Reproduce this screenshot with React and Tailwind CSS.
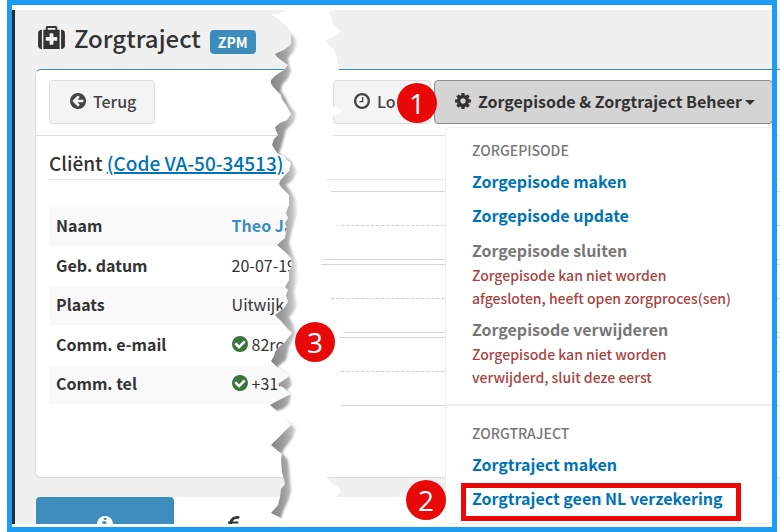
import clsx from "clsx";

const CIRCLE =
  "q0 209-103 385.5t-279.5 279.5-385.5 103-385.5-103-279.5-279.5-103-385.5 103-385.5 279.5-279.5 385.5-103 385.5 103 279.5 279.5 103 385.5z";

const paths = {
  medkit:
    "M1280 1088v-192q0-14-9-23t-23-9h-224v-224q0-14-9-23t-23-9h-192q-14 0-23 9t-9 23v224h-224q-14 0-23 9t-9 23v192q0 14 9 23t23 9h224v224q0 14 9 23t23 9h192q14 0 23-9t9-23v-224h224q14 0 23-9t9-23zm-640-704h512v-128h-512v128zm-384 0v1280h-32q-92 0-158-66t-66-158v-832q0-92 66-158t158-66h32zm1184 0v1280h-1088v-1280h160v-160q0-40 28-68t68-28h576q40 0 68 28t28 68v160h160zm352 224v832q0 92-66 158t-158 66h-32v-1280h32q92 0 158 66t66 158z",
  back:
    "M1408 960v-128q0-26-19-45t-45-19h-502l189-189q19-19 19-45t-19-45l-91-91q-18-18-45-18t-45 18l-362 362-91 91q-18 18-18 45t18 45l91 91 362 362q18 18 45 18t45-18l91-91q18-18 18-45t-18-45l-189-189h502q26 0 45-19t19-45zm256-64" +
    CIRCLE,
  clock:
    "M1024 544v448q0 14-9 23t-23 9h-320q-14 0-23-9t-9-23v-64q0-14 9-23t23-9h224v-352q0-14 9-23t23-9h64q14 0 23 9t9 23zm416 352q0-148-73-273t-198-198-273-73-273 73-198 198-73 273 73 273 198 198 273 73 273-73 198-198 73-273zm224 0" +
    CIRCLE,
  check:
    "M1412 734q0-28-18-46l-91-90q-19-19-45-19t-45 19l-408 407-226-226q-19-19-45-19t-45 19l-91 90q-18 18-18 46 0 27 18 45l362 362q19 19 45 19 27 0 46-19l543-543q18-18 18-45zm252 162" +
    CIRCLE,
  info:
    "M1152 1376v-160q0-14-9-23t-23-9h-96v-512q0-14-9-23t-23-9h-320q-14 0-23 9t-9 23v160q0 14 9 23t23 9h96v320h-96q-14 0-23 9t-9 23v160q0 14 9 23t23 9h448q14 0 23-9t9-23zm-128-896v-160q0-14-9-23t-23-9h-192q-14 0-23 9t-9 23v160q0 14 9 23t23 9h192q14 0 23-9t9-23zm640 416" +
    CIRCLE,
  cog:
    "M1152 896q0-106-75-181t-181-75-181 75-75 181 75 181 181 75 181-75 75-181zm512-109v222q0 12-8 23t-20 13l-185 28q-19 54-39 91 35 50 107 138 10 12 10 25t-9 23q-27 37-99 108t-94 71q-12 0-26-9l-138-108q-44 23-91 38-16 136-29 186-7 28-36 28h-222q-14 0-24.5-8.5t-11.5-21.5l-28-184q-49-16-90-37l-141 107q-10 9-25 9-14 0-25-11-126-114-165-168-7-10-7-23 0-12 8-23 15-21 51-66.5t54-70.5q-27-50-41-99l-183-27q-13-2-21-12.5t-8-23.5v-222q0-12 8-23t19-13l186-28q14-46 39-92-40-57-107-138-10-12-10-24 0-10 9-23 26-36 98.5-107.5t94.5-71.5q13 0 26 10l138 107q44-23 91-38 16-136 29-186 7-28 36-28h222q14 0 24.5 8.5t11.5 21.5l28 184q49 16 90 37l142-107q9-9 24-9 13 0 25 10 129 119 165 170 7 8 7 22 0 12-8 23-15 21-51 66.5t-54 70.5q26 50 41 98l183 28q13 2 21 12.5t8 23.5z",
  euro:
    "M1360 1307l35 159q3 12-3 22.5t-17 14.5l-5 1q-4 2-10.5 3.5t-16 4.5-21.5 5.5-25.5 5-30 5-33.5 4.5-36.5 3-38.5 1q-234 0-409-130.5t-238-351.5h-95q-13 0-22.5-9.5t-9.5-22.5v-113q0-13 9.5-22.5t22.5-9.5h66q-2-57 1-105h-67q-14 0-23-9t-9-23v-114q0-14 9-23t23-9h98q67-210 243.5-338t400.5-128q102 0 194 23 11 3 20 15 6 11 3 24l-43 159q-3 13-14 19.5t-24 2.5l-4-1q-4-1-11.5-2.5l-17.5-3.5-22.5-3.5-26-3-29-2.5-29.5-1q-126 0-226 64t-150 176h468q16 0 25 12 10 12 7 26l-24 114q-5 26-32 26h-488q-3 37 0 105h459q15 0 25 12 9 12 6 27l-24 112q-2 11-11 18.5t-20 7.5h-387q48 117 149.5 185.5t228.5 68.5q18 0 36-1.5t33.5-3.5 29.5-4.5 24.5-5 18.5-4.5l12-3 5-2q13-5 26 2 12 7 15 21z",
};

const Icon = ({ name, viewBox = "128 128 1536 1536", className = "size-4" }) => (
  <svg viewBox={viewBox} className={clsx("shrink-0", className)} fill="currentColor" aria-hidden="true">
    <path d={paths[name]} />
  </svg>
);

const client = [
  { label: "Naam", value: "Theo Ja", link: true },
  { label: "Geb. datum", value: "20-07-19" },
  { label: "Plaats", value: "Uitwijk" },
  { label: "Comm. e-mail", value: "82ro", verified: true },
  { label: "Comm. tel", value: "+31-", verified: true },
];

const MenuHeader = ({ children }) => (
  <h3 className="pt-0.5 text-[14px] leading-7 font-medium text-[#777]">{children}</h3>
);

const MenuLink = ({ children }) => (
  <a href="#" className="block text-[16px] leading-[34px] font-bold text-[#0073b7]">
    {children}
  </a>
);

const MenuDisabled = ({ title, lines }) => (
  <div className="pt-1.5 pb-px font-medium">
    <p className="text-[16px] leading-6 font-bold text-[#777]">{title}</p>
    <p className="mt-0.5 text-[14px] leading-[23px] text-[#a94442]">
      {lines[0]}
      <br />
      {lines[1]}
    </p>
  </div>
);

const Menu = () => (
  <div className="absolute top-full right-0 z-10 mt-[3px] w-[328px] rounded border border-[#eee] bg-white pt-1.5 pb-2">
    <div className="px-[26px]">
      <MenuHeader>ZORGEPISODE</MenuHeader>
      <MenuLink>Zorgepisode maken</MenuLink>
      <MenuLink>Zorgepisode update</MenuLink>
      <MenuDisabled
        title="Zorgepisode sluiten"
        lines={["Zorgepisode kan niet worden", "afgesloten, heeft open zorgproces(sen)"]}
      />
      <MenuDisabled
        title="Zorgepisode verwijderen"
        lines={["Zorgepisode kan niet worden", "verwijderd, sluit deze eerst"]}
      />
    </div>
    <hr className="mt-3.5 mb-[11px] border-t-2 border-[#eee]" />
    <div className="px-[26px]">
      <MenuHeader>ZORGTRAJECT</MenuHeader>
      <MenuLink>Zorgtraject maken</MenuLink>
      <MenuLink>Zorgtraject geen NL verzekering</MenuLink>
    </div>
  </div>
);

const Marker = ({ children, className }) => (
  <span
    className={clsx(
      "absolute z-30 flex size-10 items-center justify-center rounded-full bg-[#e90808] font-['Open_Sans',sans-serif] text-[28px] leading-none font-medium text-white",
      className
    )}
  >
    {children}
  </span>
);

const TEAR_LEFT =
  "M288 10L283 12 277 14 271 15 279 20 286 26 291 35V44L289 46 284 50 279 52 275 54 277 57 281 60 285 63 288 65 284 70 279 73 275 76 271 80 271 84 275 89 281 95 282 99 286 105 291 114 287 120 280 123 275 127 276 131 278 135 274 139 272 145 277 153 284 156 287 160 291 163 289 171 284 176 280 181 279 184 281 187 289 195 289 205 286 213 288 218 285 223 287 228 286 232 285 238 277 245 284 251 291 258 292 265 289 272 289 280 285 287 288 290 286 295 288 302 284 308 275 315 282 322 287 328 292 333 284 343 278 348 275 352 274 356 271 361 276 366 284 371 291 375 284 380 278 384 284 388 291 394 279 400 270 405 276 410 281 414 291 425 281 435 271 445 278 451 282 454 281 460 282 472 285 484 281 489 280 497 278 505 271 513 277 516 283 519V524";

const TEAR_RIGHT =
  "H337V496L341 491 338 486 332 484 330 480 327 478 328 470 341 404 339 370V336L344 332 329 298 321 264 322 259 338 225 331 191 326 179 333 135V116L336 115 343 111 338 108 333 106V80L339 69 337 58 334 50 330 46 326 41 332 37 337 35 341 31 337 28 333 25 332 18 329 14 331 10Z";

// white strip with ragged edges, the left one throws a shadow on it
const Tear = () => (
  <svg
    className="pointer-events-none absolute top-0 left-0 z-20"
    width="360"
    height="524"
    viewBox="0 0 360 524"
    aria-hidden="true"
  >
    <defs>
      <linearGradient id="shade" gradientUnits="userSpaceOnUse" x1="272" y1="0" x2="298" y2="0">
        <stop offset="0" stopColor="#868686" />
        <stop offset="0.5" stopColor="#a2a2a2" />
        <stop offset="0.8" stopColor="#c6c6c6" />
        <stop offset="1" stopColor="#f4f4f4" />
      </linearGradient>
      <filter id="soft" x="-10%" y="-2%" width="120%" height="104%">
        <feGaussianBlur stdDeviation="1.1" />
      </filter>
      <clipPath id="strip">
        <path d={TEAR_LEFT + TEAR_RIGHT} />
      </clipPath>
    </defs>
    <path fill="#fff" d={TEAR_LEFT + TEAR_RIGHT} />
    <g clipPath="url(#strip)">
      <path
        fill="url(#shade)"
        filter="url(#soft)"
        d="M262 17L270 16 277 20 284 26 290 33 296 39 297 45 293 52 288 58 289 65 291 71 288 78 282 85 281 91 285 97 289 105 296 113 296 118 292 124 286 130 283 141 281 148 279 153 285 157 292 162 297 173 292 181 286 185 290 190 296 200 297 213 292 230 289 243 292 252 296 262 298 277 294 292 297 305 294 312 289 317 293 324 296 333 289 347 286 360 277 367 283 371 289 375 292 385 287 390 291 395 289 404 283 409 276 411 279 415 288 422 296 429 292 439 284 449 282 453 288 460 289 467 291 492 288 501 284 509 281 518 283 524H262Z"
      />
    </g>
  </svg>
);

const App = () => {
  return (
    <div className="relative h-screen overflow-hidden bg-white pt-2.5 pb-2 pl-3 font-['Noto_Sans_CJK_SC',sans-serif] text-[#333]">
      <div className="flex h-full overflow-hidden">
        <aside className="w-[3px] shrink-0 bg-[#222d32]" />
        <main className="min-w-0 flex-1 bg-[#f0f0f0] pl-5">
          <header className="flex h-[59px] items-center gap-[9px] pb-1 pl-[3px]">
            <Icon name="medkit" viewBox="0 128 1792 1536" className="h-[23px] w-[27px]" />
            <h1 className="text-[24px] leading-8 font-medium">Zorgtraject</h1>
            <span className="mt-2 rounded bg-[#3c8dbc] px-2 text-[14px] leading-6 font-bold text-white">
              ZPM
            </span>
          </header>

          <section className="rounded-l-md border border-r-0 border-[#ddd] border-t-[#3c8dbc] bg-white">
            <div className="flex items-start justify-between border-b border-[#ddd] pt-2.5 pr-[7px] pb-[11px] pl-[13px] text-[16px] font-medium">
              <button
                type="button"
                className="flex h-11 items-center gap-[7px] rounded border border-[#ddd] bg-[#f4f4f4] pr-[18px] pb-0.5 pl-5 text-[#444]"
              >
                <Icon name="back" />
                Terug
              </button>
              <div className="flex gap-[3px]">
                <button
                  type="button"
                  className="flex h-11 w-[98px] items-center gap-[7px] rounded border border-[#ddd] bg-[#f4f4f4] pb-0.5 pl-5 text-[#444]"
                >
                  <Icon name="clock" />
                  Lo
                </button>
                <div className="relative">
                  <button
                    type="button"
                    className="flex h-11 w-[339px] items-center gap-[7px] rounded border border-[#8c8c8c] bg-[#d4d4d4] pb-0.5 pl-5 font-bold whitespace-nowrap"
                  >
                    <Icon name="cog" />
                    <span>Zorgepisode &amp; Zorgtraject Beheer</span>
                    <span className="mt-0.5 -ml-1 border-x-[5px] border-t-[5px] border-x-transparent border-t-[#333]" />
                  </button>
                  <Menu />
                </div>
              </div>
            </div>

            <div className="pt-3 pb-[71px] pl-[13px]">
              <h2 className="border-b border-[#e5e5e5] pb-0.5 text-[19px] leading-[29px] font-medium">
                Cliënt{" "}
                <a href="#" className="text-[#0073b7] underline decoration-2">
                  (Code VA-50-34513)
                </a>
              </h2>
              <div className="flex">
                <table className="mt-[27px] w-[247px] shrink-0 self-start text-left text-[16px]">
                  <tbody>
                    {client.map(({ label, value, link, verified }) => (
                      <tr key={label} className="h-10 odd:h-[39px] odd:bg-[#f9f9f9]">
                        <th className="w-[183px] pb-[3px] pl-[7px] font-bold">{label}</th>
                        <td className="pb-[3px] whitespace-nowrap">
                          <span className="flex items-center gap-1">
                            {verified && <Icon name="check" className="size-4 text-[#3c763d]" />}
                            {link ? (
                              <a href="#" className="font-bold text-[#3c8dbc]">
                                {value}
                              </a>
                            ) : (
                              value
                            )}
                          </span>
                        </td>
                      </tr>
                    ))}
                  </tbody>
                </table>
                <div className="mt-[11px] flex flex-1 flex-col gap-1">
                  {[0, 1, 2].map((i) => (
                    <div key={i} className="h-[69px] border-y border-[#d2d6de]">
                      <div className="h-[34px] border-b border-dashed border-[#ccc]" />
                    </div>
                  ))}
                </div>
              </div>
            </div>
          </section>

          <nav className="mt-[19px] ml-px flex bg-white">
            <a
              href="#"
              aria-label="Info"
              className="flex h-16 w-[138px] items-start justify-center rounded-t bg-[#3c8dbc] pt-[19px] text-white"
            >
              <Icon name="info" />
            </a>
            <a
              href="#"
              aria-label="Financieel"
              className="flex h-16 w-[120px] items-start justify-center pt-[19px]"
            >
              <Icon name="euro" className="size-[18px]" />
            </a>
          </nav>
        </main>
      </div>

      <Tear />
      <div className="pointer-events-none absolute inset-y-0 right-[3px] left-[7px] z-20 border-5 border-[#1b9cf5]" />
      <div className="pointer-events-none absolute right-[39px] bottom-[11px] z-20 h-[38px] w-[280px] border-5 border-[#e90808]" />
      <Marker className="top-[83px] right-[343px]">1</Marker>
      <Marker className="right-[334px] bottom-3">2</Marker>
      <Marker className="top-[322px] left-[295px]">3</Marker>
    </div>
  );
};

export default App;
